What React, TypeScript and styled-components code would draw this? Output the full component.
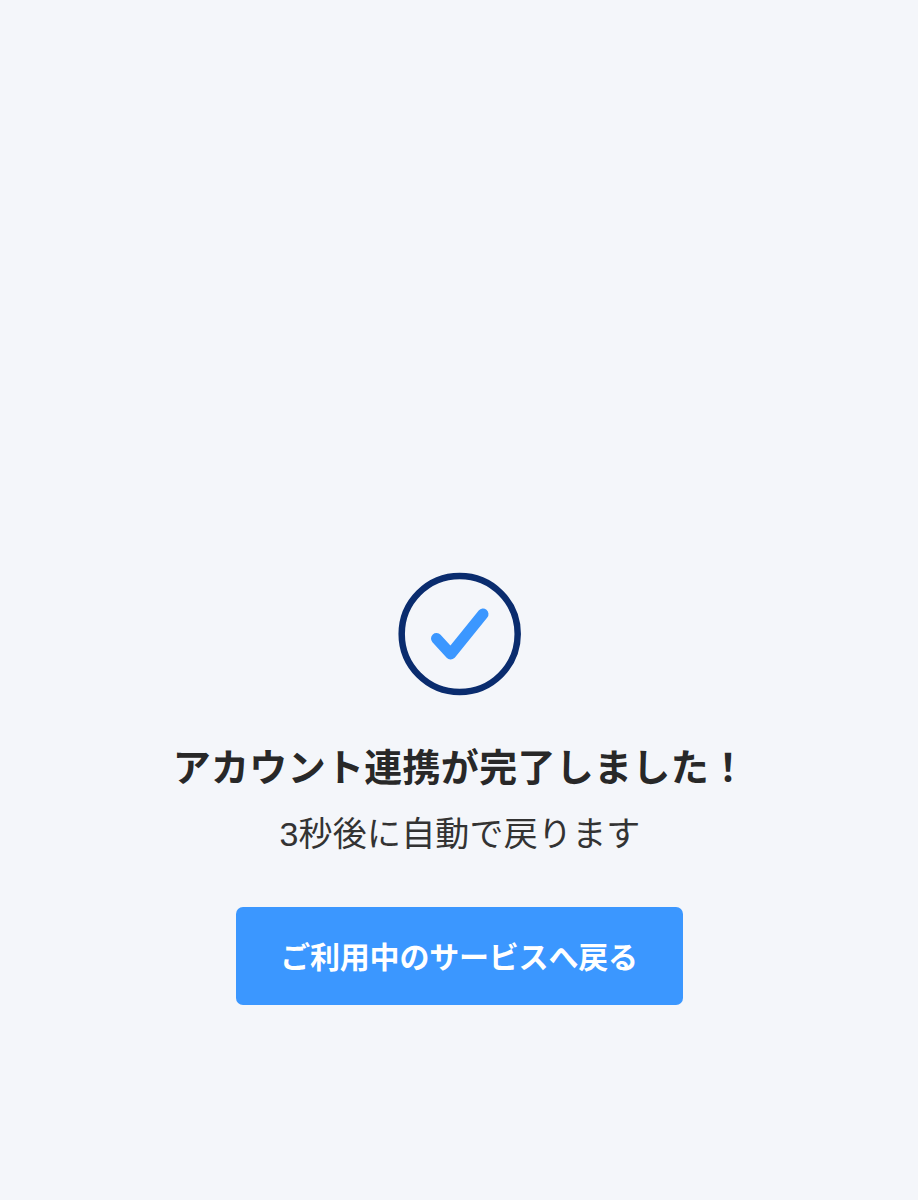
import React from 'react';
import styled, { createGlobalStyle } from 'styled-components';

const GlobalStyle = createGlobalStyle`
  html, body {
    margin: 0;
    padding: 0;
    background: #f4f6fa;
  }
`;

const Page = styled.div`
  box-sizing: border-box;
  height: 1200px;
  padding-top: 572px;
  display: flex;
  flex-direction: column;
  align-items: center;
  background: #f4f6fa;
  font-family: "Liberation Sans", "Noto Sans CJK JP", sans-serif;
`;

const CheckIcon = styled.svg`
  display: block;
  width: 124px;
  height: 124px;
  margin-bottom: 47px;
`;

const Title = styled.h1`
  margin: 0 0 19px;
  padding-left: 2px;
  font-size: 38px;
  line-height: 50px;
  font-weight: 700;
  letter-spacing: 0.3px;
  color: #282828;
`;

const Message = styled.p`
  margin: 0 0 51px;
  padding-left: 2px;
  font-size: 34px;
  line-height: 44px;
  font-weight: 400;
  letter-spacing: 0.2px;
  color: #333;
`;

const BackButton = styled.button`
  width: 447px;
  height: 98px;
  padding: 0 0 3px;
  border: none;
  border-radius: 7px;
  background: #3b97ff;
  color: #fff;
  font-family: inherit;
  font-size: 30px;
  font-weight: 700;
  letter-spacing: -0.2px;
`;

export default function App() {
  return (
    <Page>
      <GlobalStyle />
      <CheckIcon viewBox="0 0 124 124" fill="none">
        <circle cx="62.7" cy="62" r="58" stroke="#0a2c6e" strokeWidth="6.5" />
        <path d="M39.5 66.5 L53.7 82 L86 42" stroke="#3b97ff" strokeWidth="11" strokeLinecap="round" strokeLinejoin="round" />
      </CheckIcon>
      <Title>アカウント連携が完了しました！</Title>
      <Message>3秒後に自動で戻ります</Message>
      <BackButton>ご利用中のサービスへ戻る</BackButton>
    </Page>
  );
}
